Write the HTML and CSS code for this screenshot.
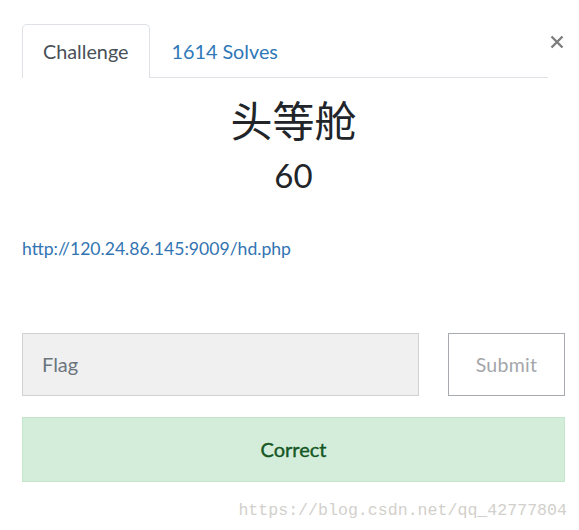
FILE: index.html
```html
<!DOCTYPE html>
<html lang="zh">
<head>
<meta charset="utf-8">
<link rel="stylesheet" href="styles.css">
</head>
<body>
<div class="modal">
  <div class="header">
    <ul class="tabs">
      <li class="tab active">Challenge</li>
      <li class="tab">1614 Solves</li>
    </ul>
    <button class="close" aria-label="Close">
      <svg width="14" height="14" viewBox="0 0 14 14"><path d="M1.5 1.5 L12.5 12.5 M12.5 1.5 L1.5 12.5" stroke="#7d7d7d" stroke-width="2.4" fill="none"/></svg>
    </button>
  </div>
  <h2 class="name">头等舱</h2>
  <h3 class="value">60</h3>
  <a class="link" href="#">http://120.24.86.145:9009/hd.php</a>
  <div class="form">
    <div class="input">Flag</div>
    <div class="submit">Submit</div>
  </div>
  <div class="alert">Correct</div>
  <div class="watermark">https://blog.csdn.net/qq_42777804</div>
</div>
</body>
</html>
```

FILE: styles.css
```css
html, body {
  margin: 0;
  padding: 0;
  background: #fff;
}
body {
  font-family: Lato, "Noto Sans", sans-serif;
  width: 579px;
  height: 530px;
  overflow: hidden;
}
.modal {
  padding: 24px 14px 0 22px;
}
.header {
  display: flex;
  align-items: flex-start;
}
.tabs {
  flex: 0 0 526px;
  display: flex;
  list-style: none;
  margin: 0;
  padding: 0;
  border-bottom: 1px solid #dee2e6;
}
.tab {
  font-size: 19.8px;
  line-height: 29px;
  padding: 12px 21px 11px 20px;
  color: #2f78b8;
  border: 1px solid transparent;
  border-bottom: 0;
  border-radius: 5px 5px 0 0;
  margin-bottom: -1px;
}
.tab.active {
  color: #495057;
  border-color: #dee2e6;
  background: #fff;
  padding-bottom: 12px;
}
.close {
  display: flex;
  padding: 0;
  margin: 11px 0 0 2px;
  border: 0;
  background: none;
}
.name {
  font-family: "Noto Sans CJK SC", sans-serif;
  font-weight: 400;
  font-size: 42px;
  line-height: 48px;
  text-align: center;
  color: #212529;
  margin: 17px 0 0 0;
}
.value {
  font-weight: 400;
  font-size: 33px;
  line-height: 40px;
  text-align: center;
  color: #212529;
  margin: 12px 0 0 0;
}
.link {
  display: block;
  font-size: 17.6px;
  line-height: 24px;
  color: #3274b2;
  text-decoration: none;
  margin-top: 42px;
}
.form {
  display: flex;
  gap: 29px;
  margin-top: 72px;
}
.input {
  flex: 1;
  box-sizing: border-box;
  height: 63px;
  border: 1px solid #cfd2d5;
  background: #f0f0f0;
  color: #6c757d;
  font-size: 20px;
  line-height: 61px;
  padding-left: 19px;
}
.submit {
  width: 117px;
  height: 63px;
  box-sizing: border-box;
  border: 1px solid #a7aaae;
  color: #a3a6aa;
  font-size: 19.5px;
  line-height: 61px;
  text-align: center;
  letter-spacing: 0.3px;
}
.alert {
  margin-top: 21px;
  height: 65px;
  box-sizing: border-box;
  background: #d4edda;
  border: 1px solid #c3e6cb;
  color: #155724;
  font-size: 20px;
  font-weight: 400;
  -webkit-text-stroke: 0.4px #155724;
  line-height: 63px;
  text-align: center;
}
.watermark {
  font-family: "Liberation Mono", monospace;
  font-size: 16.6px;
  line-height: 20px;
  color: #d2d0cb;
  text-align: right;
  margin-top: 19px;
  margin-right: -2px;
}
```
